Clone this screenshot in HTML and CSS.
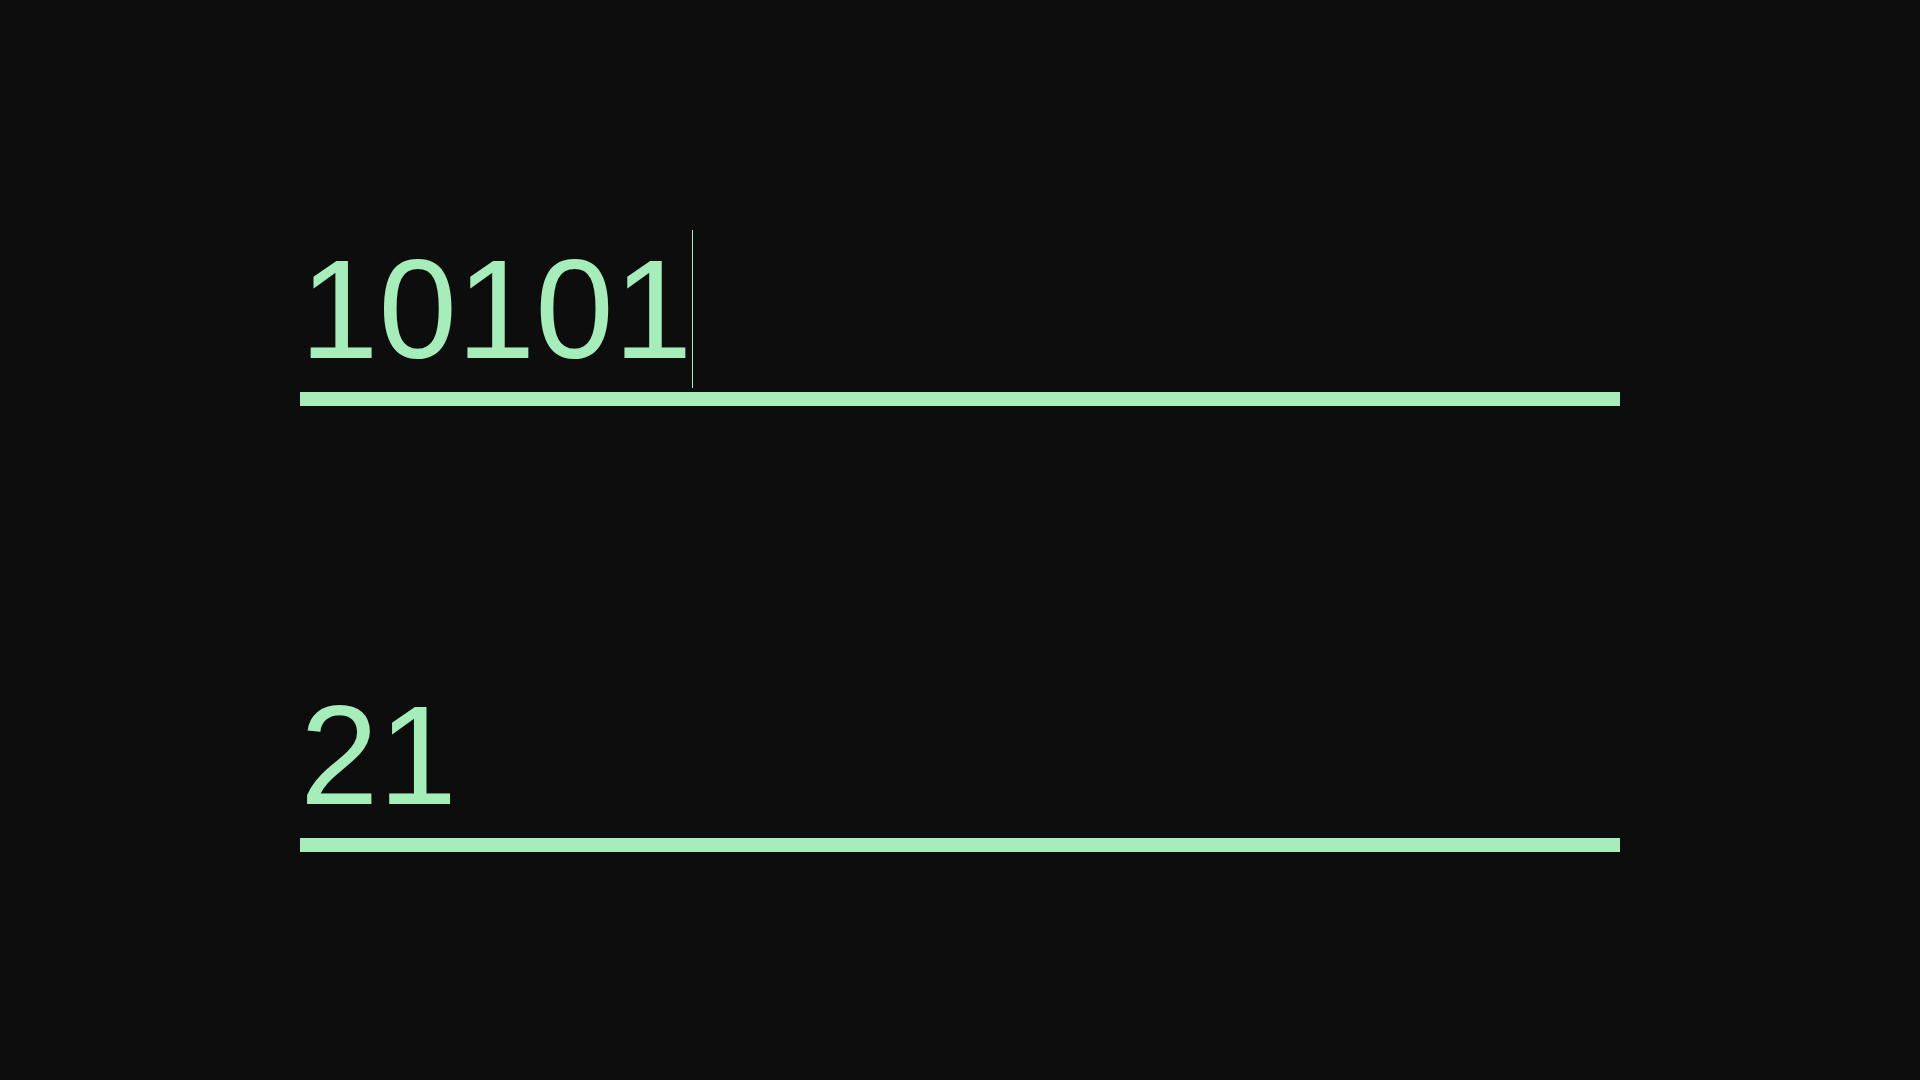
FILE: index.html
```html
<!DOCTYPE html>
<html lang="en">
<head>
<meta charset="utf-8">
<title>Converter</title>
<link rel="stylesheet" href="styles.css">
</head>
<body>
<main class="converter">
  <div class="field"><span class="value">10101</span><span class="caret"></span></div>
  <div class="field"><span class="value">21</span></div>
</main>
</body>
</html>
```
FILE: styles.css
```css
html, body {
  margin: 0;
  padding: 0;
  background: #0d0d0d;
  height: 100%;
}
body {
  font-family: "Liberation Sans", Arial, sans-serif;
  color: #a6eeb9;
}
.converter {
  width: 1320px;
  margin: 0 auto;
  padding-top: 229px;
  display: flex;
  flex-direction: column;
  gap: 269px;
}
.field {
  font-size: 141px;
  line-height: 160px;
  height: 160px;
  padding-bottom: 3px;
  border-bottom: 14px solid #a6eeb9;
  white-space: nowrap;
}
.caret {
  border-left: 1px solid #a6eeb9;
}
```
